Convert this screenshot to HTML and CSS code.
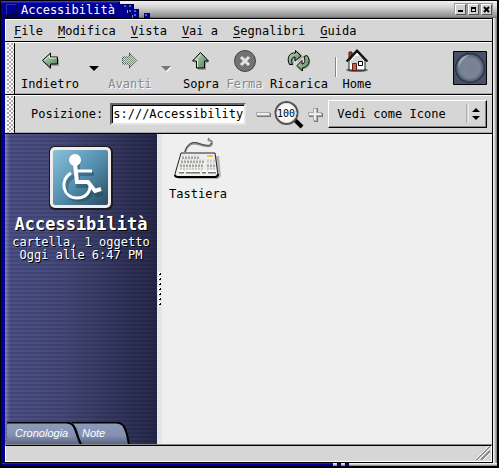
FILE: index.html
```html
<!DOCTYPE html>
<html lang="it">
<head>
<meta charset="utf-8">
<title>Accessibilità</title>
<link rel="stylesheet" href="styles.css">
</head>
<body>
<svg width="0" height="0" class="defs" aria-hidden="true">
  <defs>
    <linearGradient id="green" x1="0" y1="0" x2="1" y2="1"><stop offset="0" stop-color="#c4e4c4"/><stop offset="1" stop-color="#4c7a54"/></linearGradient>
    <linearGradient id="blue" x1="0" y1="0" x2="1" y2="1"><stop offset="0" stop-color="#8cc0dc"/><stop offset=".5" stop-color="#5590b0"/><stop offset="1" stop-color="#284c60"/></linearGradient>
    <linearGradient id="tab" x1="0" y1="0" x2="0" y2="1"><stop offset="0" stop-color="#8c9abc"/><stop offset=".6" stop-color="#8490b0"/><stop offset="1" stop-color="#5c6684"/></linearGradient>
    <radialGradient id="ball" cx=".5" cy=".5" r=".5"><stop offset="0" stop-color="#707a8e"/><stop offset=".65" stop-color="#7a8498"/><stop offset=".85" stop-color="#5a6478"/><stop offset="1" stop-color="#1c222e"/></radialGradient>
    <pattern id="checker" width="2" height="2" patternUnits="userSpaceOnUse"><rect width="1" height="1" fill="#d6d6d6"/><rect x="1" y="1" width="1" height="1" fill="#d6d6d6"/></pattern>
    <pattern id="rust" width="2" height="2" patternUnits="userSpaceOnUse"><rect width="2" height="2" fill="#b8644c"/><rect width="1" height="1" fill="#6c6c6c"/><rect x="1" y="1" width="1" height="1" fill="#6c6c6c"/></pattern>
  </defs>
</svg>
<div class="window">
  <header class="titlebar">
    <div class="title-blue"><span class="window-menu"></span><h1>Accessibilità</h1></div>
    <svg class="title-edge" width="34" height="17" viewBox="0 0 34 17" shape-rendering="crispEdges">
      <path d="M0 0H2V3H6V8H9V12H14V17H0Z" fill="#000090"/>
      <path d="M0 0H2V1H0Z" fill="#4848c0"/>
      <g fill="#000050"><path d="M5 3h6v6H5zM10 3h6v6h-6zM10 8h6v6h-6zM15 8h6v5h-6zM15 12h6v5h-6zM26 12h6v5h-6z"/></g>
      <g fill="#0000a0"><path d="M6 4h4v4H6zM11 4h4v4h-4zM11 9h4v4h-4zM16 9h4v3h-4zM16 13h4v3h-4zM27 13h4v3h-4z"/></g>
      <path d="M6 4h2v2H6zM11 4h2v2h-2zM11 9h2v2h-2zM16 9h2v2h-2zM16 13h2v2h-2zM27 13h2v2h-2z" fill="#5060d0"/>
    </svg>
    <div class="window-buttons">
      <button aria-label="Riduci"><svg width="9" height="9" viewBox="0 0 9 9"><path d="M2 5h5v2H2z"/></svg></button>
      <button aria-label="Ingrandisci"><svg width="9" height="9" viewBox="0 0 9 9" shape-rendering="crispEdges"><path fill-rule="evenodd" d="M2 2h5v5H2zM3 4v2h3V4z"/></svg></button>
      <button aria-label="Chiudi"><svg width="9" height="9" viewBox="0 0 9 9"><path d="M2 2l5 5M7 2L2 7" stroke="#000" stroke-width="2"/></svg></button>
    </div>
  </header>
  <main class="client">
    <nav class="menubar">
      <button><u>F</u>ile</button><button><u>M</u>odifica</button><button><u>V</u>ista</button><button><u>V</u>ai a</button><button><u>S</u>egnalibri</button><button><u>G</u>uida</button>
    </nav>
    <div class="bar toolbar">
      <span class="grip"></span>
      <div class="tools">
        <button class="tool back"><svg width="24" height="24" viewBox="0 0 24 24"><path d="M5 13l8-7v4h8v7h-8v4z" fill="#000" opacity=".25"/><path d="M4.500 11.500L12.500 4v4h7v7h-7v4z" fill="url(#green)" stroke="#000"/><path d="M6.500 11.500l5-5v2.500h7" fill="none" stroke="#d8f0d8"/></svg>Indietro</button>
        <button class="drop" aria-label="Cronologia indietro"><svg width="11" height="7" viewBox="0 0 11 7"><path d="M0 1h10L5 6z"/></svg></button>
        <button class="tool forward" disabled><svg width="24" height="24" viewBox="0 0 24 24"><path d="M19.500 11.500L11.500 4v4h-7v7h7v4z" fill="#78907c" stroke="#333"/><path d="M20 11.500L11.500 3v4h-8v9h8v4z" fill="url(#checker)"/></svg>Avanti</button>
        <button class="drop" aria-label="Cronologia avanti" disabled><svg width="11" height="7" viewBox="0 0 11 7"><path d="M1 2h10L6 7z" fill="#fff"/><path d="M0 1h10L5 6z" fill="#777"/></svg></button>
        <button class="tool up"><svg width="24" height="24" viewBox="0 0 24 24"><path d="M5 14l8-9 7 9h-3v7H9v-7z" fill="#000" opacity=".25"/><path d="M11.500 3.500L19.500 12h-4v7h-8v-7h-4z" fill="url(#green)" stroke="#000"/><path d="M8.500 18v-7h-2l5-5.500" fill="none" stroke="#d8f0d8"/></svg>Sopra</button>
        <button class="tool stop" disabled><svg width="24" height="24" viewBox="0 0 24 24"><circle cx="12" cy="12" r="10.500" fill="url(#rust)" stroke="#444"/><path d="M8 8l8 8M16 8l-8 8" stroke="#e4e4e4" stroke-width="3"/></svg>Ferma</button>
        <button class="tool reload"><svg width="24" height="24" viewBox="0 0 24 24"><g fill="#000" opacity=".2" transform="translate(1 1)"><path d="M2 15C0 8 4 3 10 4V1l6 6-6 5V8c-3 0-5 3-4 7zM21 8c3 7-1 11-7 11v3l-6-5 6-6v4c3 0 5-3 4-6z"/></g><g fill="url(#green)" stroke="#000" stroke-linejoin="round"><path d="M2.500 15.500C-1 9 3 3 8.500 4V1.500L14 7l-6 5V8C5 8 3.500 11 5.500 15.500z"/><path d="M20 6.500c4.500 5 1.500 12-4.500 12.500v3L10 16.500l5-5V15c3 0 3.500-4 2-7.500z"/></g></svg>Ricarica</button>
        <span class="separator"></span>
        <button class="tool home"><svg width="24" height="24" viewBox="0 0 24 24"><ellipse cx="12" cy="21" rx="11" ry="2" fill="#606c5c"/><path d="M4 3h3v6H4z" fill="#b43c2c" stroke="#501810"/><path d="M4 12l8-9 8 9v9H4z" fill="#fff" stroke="#222"/><path d="M6 12h12M6 14h7M10 8h5M8 10h9" stroke="#aaa"/><path d="M1.500 12.500L12 1.500 22.500 12.500" fill="none" stroke="#111" stroke-width="2"/><path d="M7.500 14.500h4v7h-4z" fill="#d85c48" stroke="#602018"/><path d="M13.500 12.500h4v4h-4z" fill="#fff" stroke="#000"/></svg>Home</button>
      </div>
      <svg class="throbber" width="34" height="34" viewBox="0 0 34 34"><path d="M.5.5h33v33H.5z" fill="#465066" stroke="#000"/><circle cx="17" cy="17" r="15" fill="url(#ball)"/><path d="M5 17C5 9 10 4 17 4c-5 2-9 6-12 13z" fill="#c8ced8" opacity=".65"/><circle cx="18" cy="18" r="9" fill="#7c869a" opacity=".6"/></svg>
    </div>
    <div class="bar locationbar">
      <span class="grip"></span>
      <form class="location">
        <label for="address">Posizione:</label>
        <input id="address" type="text" value="s:///Accessibility">
        <div class="zoom">
          <button type="button" aria-label="Rimpicciolisci"><svg width="15" height="15" viewBox="0 0 15 15"><path d="M1 6h14v4H1z" fill="#777"/><path d="M0 5h14v4H0z" fill="#aaa"/><path d="M1 6h12v2H1z" fill="#eee"/></svg></button>
          <button type="button" aria-label="Zoom 100"><svg width="31" height="30" viewBox="0 0 31 30"><path d="M20 20l8 8" stroke="#000" stroke-width="4"/><circle cx="12.500" cy="14" r="11" fill="#fafafa" stroke="#555" stroke-width="2"/><circle cx="12.500" cy="14" r="9.500" fill="none" stroke="#ddd"/><text x="12" y="18" text-anchor="middle" class="zoom-text">100</text></svg></button>
          <button type="button" aria-label="Ingrandisci"><svg width="15" height="15" viewBox="0 0 15 15"><path d="M6 1h4v5h5v4h-5v5H6v-5H1V6h5z" fill="#777"/><path d="M5 1h4v4h5v4H9v5H5V9H0V5h5z" fill="#aaa"/><path d="M6 2h2v4h5v2H8v5H6V8H1V6h5z" fill="#eee"/></svg></button>
        </div>
        <div class="view">
          <select aria-label="Vista"><option>Vedi come Icone</option></select>
          <svg class="view-arrows" width="16" height="22" viewBox="0 0 16 22"><path d="M1 1v19" stroke="#888"/><path d="M2 1v19" stroke="#fff"/><path d="M6 9l4-4 4 4zM6 13h8l-4 4z"/></svg>
        </div>
      </form>
    </div>
    <div class="content">
      <aside class="sidebar">
        <svg width="66" height="66" viewBox="0 0 66 66"><rect x="1" y="1" width="64" height="64" rx="6" fill="#1a1a20"/><rect x="2" y="2" width="61" height="61" rx="5" fill="#f0ecec"/><rect x="5" y="5" width="55" height="55" rx="2" fill="url(#blue)"/><g fill="none" stroke="#143448" stroke-width="4" opacity=".35" transform="translate(2 2)"><path d="M28 17v22h13l6 9 6-2M29 27h15M24 29c-13 7-9 24 5 24 8 0 13-5 13-10"/></g><g fill="none" stroke="#fff"><circle cx="27" cy="15" r="5" fill="#fff" stroke-width="2"/><path d="M27 19l2 18h11l7 9 6-2" stroke-width="4"/><path d="M28 26h16" stroke-width="3"/><path d="M23 28c-12 7-8 25 6 25 8 0 13-5 13-12" stroke-width="3"/></g></svg>
        <h2>Accessibilità</h2>
        <p>cartella, 1 oggetto</p>
        <p>Oggi alle 6:47 PM</p>
        <div class="tabs">
          <button class="tab history"><svg width="80" height="22" viewBox="0 0 80 22"><path d="M0 1h58c8 0 9 5 11 12l3 9H0z" fill="url(#tab)"/><path d="M0 .5h59c8 0 9 6 11 12l4 10" fill="none" stroke="#000" stroke-width="2"/></svg><span>Cronologia</span></button>
          <button class="tab notes"><svg width="60" height="22" viewBox="0 0 60 22"><path d="M0 1h44c8 0 9 5 11 12l2 9H8C7 15 7 7 0 1z" fill="url(#tab)"/><path d="M0 .5h44c8 0 9 6 11 12l2 10" fill="none" stroke="#000" stroke-width="2"/></svg><span>Note</span></button>
        </div>
      </aside>
      <div class="splitter"><svg width="4" height="35" viewBox="0 0 4 35" shape-rendering="crispEdges"><path d="M0 0h3v3H0zM0 5h3v3H0zM0 10h3v3H0zM0 15h3v3H0zM0 20h3v3H0zM0 25h3v3H0zM0 30h3v3H0z" fill="#fff"/><path d="M2 1h1v2H1V2h1zM2 6h1v2H1V7h1zM2 11h1v2H1v-1h1zM2 16h1v2H1v-1h1zM2 21h1v2H1v-1h1zM2 26h1v2H1v-1h1zM2 31h1v2H1v-1h1z"/></svg></div>
      <section class="files">
        <a href="#" class="file"><svg width="50" height="46" viewBox="0 0 50 46"><path d="M10 22l36-2 2 20-3 3H5z" fill="#000" opacity=".25"/><path d="M12 16C14 9 19 6 25 8s14 4 14-1-5 0-3-5" fill="none" stroke="#888" stroke-width="2"/><path d="M12 16C14 8 19 5 25 7s13 4 13 0" fill="none" stroke="#444"/><path d="M8 17h34l3 22q0 2-3 2H4q-3 0-2-3z" fill="#f0efec" stroke="#222" stroke-width="1"/><path d="M2 39q0 2 3 2h37q3 0 3-3" fill="none" stroke="#000" stroke-width="2"/><path d="M9 21h17M8 25h23M7 29h24M7 33h24M34 25h8M34 29h8M34 33h9" stroke="#ccc" stroke-width="3" stroke-dasharray="2 1"/><path d="M9 22h17M8 26h23M7 30h24M34 30h8" stroke="#777" stroke-dasharray="2 1"/><path d="M34 20h6" stroke="#e4cc40" stroke-width="2"/><path d="M6 36h5M13 36h14M29 36h4M35 36h8" stroke="#777" stroke-width="3"/><path d="M6 35h5M13 35h14M29 35h4M35 35h8" stroke="#fff" stroke-width="2"/></svg>Tastiera</a>
      </section>
    </div>
    <footer class="statusbar"><svg width="14" height="14" viewBox="0 0 14 14"><path d="M0 14L14 0M5 14l9-9" stroke="#888" stroke-width="2"/><path d="M1 15L15 1M6 15l9-9M-1 14L13 0" stroke="#fff"/></svg></footer>
  </main>
  <div class="bottom-edge"><span class="edge-blue"></span><span class="edge-dot"></span><span class="edge-dot"></span></div>
</div>
</body>
</html>
```
FILE: styles.css
```css
* { box-sizing: border-box; }
body {
  margin: 0;
  background: #000;
  color: #000;
  font: 12px/14px "DejaVu Sans Mono", monospace;
}
.defs { position: absolute; }
button, input, select {
  margin: 0;
  padding: 0;
  border: 0;
  border-radius: 0;
  background: none;
  color: inherit;
  font: inherit;
}
svg { display: block; flex: none; }
h1, h2, p { margin: 0; font-weight: normal; }

.window {
  display: flex;
  flex-direction: column;
  height: 100vh;
  padding: 1px 2px 2px 1px;
}
.titlebar {
  display: flex;
  flex: none;
  height: 17px;
  background: linear-gradient(#f4f0f4, #d0d0d0 40%, #909090 90%, #666);
}
.title-blue {
  display: flex;
  align-items: center;
  gap: 4px;
  padding: 0 3px 0 5px;
  background: linear-gradient(#4848c0, #0000a0 15%, #000080 80%, #000050);
  color: #fff;
}
.title-blue h1 { font-size: 12px; line-height: 16px; }
.window-menu {
  width: 11px;
  height: 11px;
  border: 1px solid #000050;
  border-top-color: #3030b0;
  border-left-color: #3030b0;
}
.window-buttons {
  display: flex;
  gap: 2px;
  margin-left: auto;
  padding: 3px 5px 0 0;
}
.window-buttons button {
  width: 11px;
  height: 11px;
  background: #d0d0d0;
  border: 1px solid #555;
  border-top-color: #fff;
  border-left-color: #fff;
  box-shadow: 0 0 0 1px #999;
}
.client {
  position: relative;
  display: flex;
  flex: 1;
  flex-direction: column;
  min-height: 0;
  margin-right: 4px;
  border: 1px solid #000;
  border-left: 4px solid #000090;
}
.client::after {
  content: "";
  position: absolute;
  top: -1px;
  bottom: -1px;
  right: -5px;
  width: 4px;
  background: linear-gradient(90deg, #fff, #d0d0d0 40%, #777);
}
.menubar {
  display: flex;
  flex: none;
  gap: 15px;
  height: 22px;
  padding: 1px 8px 0;
  background: #d6d6d6;
  border-top: 1px solid #fff;
  border-left: 1px solid #fff;
}
.menubar u { text-underline-offset: 2px; }
.bar {
  display: flex;
  flex: none;
  background: #d6d6d6;
  border-top: 1px solid #000;
  box-shadow: inset 0 1px #fff, inset 0 -1px #aaa;
}
.grip {
  flex: none;
  width: 10px;
  margin: 1px 0 0;
  border-right: 1px solid #000;
  border-left: 2px solid #eee;
  background: conic-gradient(#fff 25%, #b0b0b0 0 50%, #fff 0 75%, #aaa 0) 0 0 / 4px 4px;
}
.toolbar { height: 53px; align-items: stretch; }
.tools { display: flex; flex: 1; padding: 7px 0 0 5px; }
.tool {
  display: flex;
  flex-direction: column;
  align-items: center;
  justify-content: flex-start;
  gap: 4px;
  white-space: nowrap;
}
.back { width: 60px; }
.forward { width: 44px; }
.up { width: 42px; }
.stop { width: 45px; }
.reload { width: 64px; }
.home { width: 34px; }
.tool:disabled { color: #888; text-shadow: 1px 1px #fff; }
.drop { display: flex; padding: 16px 0 0; width: 28px; justify-content: center; }
.separator {
  width: 2px;
  height: 20px;
  margin: 8px 3px 0 4px;
  border-left: 1px solid #888;
  border-right: 1px solid #fff;
}
.throbber { margin: 9px 5px 0 0; }
.locationbar { height: 39px; border-bottom: 0; }
.location {
  display: flex;
  flex: 1;
  align-items: center;
  padding: 0 5px 0 16px;
  min-width: 0;
}
.location label { margin-right: 7px; white-space: nowrap; }
.location input {
  width: 136px;
  height: 22px;
  padding: 0 0 0 1px;
  background: #fff;
  border: 2px solid #e4e4e4;
  border-top-color: #666;
  border-left-color: #666;
  box-shadow: inset 1px 1px #000;
}
.zoom { display: flex; align-items: center; gap: 3px; margin: 0 5px 0 10px; }
.zoom-text { font: 10px "DejaVu Sans Mono", monospace; }
.view { position: relative; flex: 1; }
.view select {
  appearance: none;
  width: 100%;
  height: 28px;
  padding: 0 8px;
  background: #d6d6d6;
  border: 1px solid #000;
  border-top-color: #fff;
  border-left-color: #fff;
  box-shadow: inset -1px -1px #888;
}
.view-arrows { position: absolute; top: 3px; right: 5px; pointer-events: none; }
.content {
  display: flex;
  flex: 1;
  min-height: 0;
  background: #efefef;
  border-top: 1px solid #000;
  border-bottom: 1px solid #888;
}
.sidebar {
  display: flex;
  flex: none;
  flex-direction: column;
  align-items: center;
  width: 152px;
  padding-top: 11px;
  background:
    repeating-linear-gradient(transparent 0 2px, rgba(0, 0, 0, .12) 2px 4px),
    linear-gradient(90deg, #8080b0, #4c5088 5px, #444878 40%, #26284a);
  color: #fff;
  text-shadow: 1px 1px #000;
  white-space: nowrap;
}
.sidebar h2 { font-size: 17px; font-weight: bold; line-height: 20px; margin: 3px 0 2px; }
.sidebar p { line-height: 13px; }
.tabs {
  display: flex;
  align-self: stretch;
  margin-top: auto;
  padding-left: 2px;
}
.tab {
  display: grid;
  color: #fff;
  font: italic 11px/22px "Liberation Sans", sans-serif;
  text-align: left;
}
.tab svg, .tab span { grid-area: 1 / 1; }
.tab span { padding-left: 8px; }
.history { z-index: 1; }
.notes { margin-left: -15px; }
.notes span { padding-left: 10px; }
.splitter {
  display: flex;
  align-items: center;
  flex: none;
  width: 5px;
  padding-left: 1px;
  background: #e6e6e6;
}
.files { flex: 1; padding: 2px 0 0 4px; }
.file {
  display: flex;
  flex-direction: column;
  align-items: center;
  gap: 5px;
  width: 64px;
  color: inherit;
  text-decoration: none;
}
.statusbar {
  display: flex;
  flex: none;
  justify-content: flex-end;
  align-items: flex-end;
  height: 17px;
  padding: 0 1px 1px;
  background: #d6d6d6;
  border: 1px solid #fff;
  border-top-color: #000;
}
.bottom-edge {
  display: flex;
  flex: none;
  gap: 4px;
  height: 3px;
  background: linear-gradient(#fff, #bbb 60%, #777);
}
.edge-blue { width: 67%; background: linear-gradient(#3030c0, #0000a0 50%, #000070); }
.edge-dot { width: 4px; background: #1010a0; border: 1px solid #000040; }
```
